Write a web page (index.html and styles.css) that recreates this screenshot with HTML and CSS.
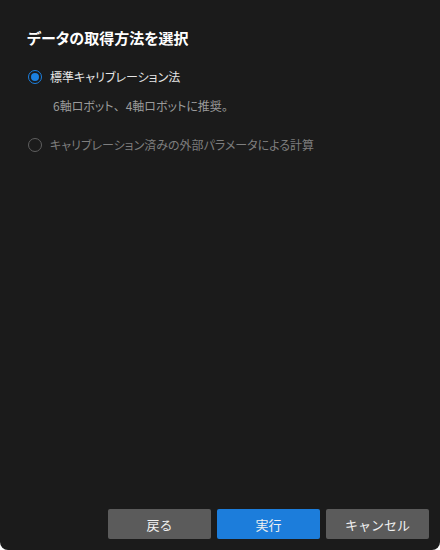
FILE: index.html
```html
<!DOCTYPE html>
<html lang="ja">
<head>
<meta charset="utf-8">
<link rel="stylesheet" href="styles.css">
</head>
<body>
<div class="dialog">
  <div class="content">
    <h1 class="title">データの取得方法を選択</h1>
    <div class="option">
      <span class="radio checked"></span>
      <span class="label">標準キャリブレーション法</span>
    </div>
    <div class="desc">6軸ロボット<span class="comma">、</span>4軸ロボットに推奨。</div>
    <div class="option disabled">
      <span class="radio"></span>
      <span class="label">キャリブレーション済みの外部パラメータによる計算</span>
    </div>
  </div>
  <div class="footer">
    <button class="btn">戻る</button>
    <button class="btn primary">実行</button>
    <button class="btn">キャンセル</button>
  </div>
</div>
</body>
</html>
```
FILE: styles.css
```css
html {
  background: #ffffff;
}
body {
  margin: 0;
  width: 440px;
  height: 550px;
  font-family: "Noto Sans CJK JP", "Noto Sans", sans-serif;
  font-feature-settings: "palt";
}
.dialog {
  width: 440px;
  height: 550px;
  background: #1b1b1b;
  border-radius: 0 0 8px 8px;
  display: flex;
  flex-direction: column;
  box-sizing: border-box;
}
.content {
  flex: 1;
  padding: 28px 0 0 27px;
}
.title {
  margin: 0;
  font-size: 15px;
  font-weight: bold;
  color: #ffffff;
  line-height: 20px;
}
.option {
  display: flex;
  align-items: center;
  margin-top: 19px;
  color: #e6e6e6;
  font-size: 12px;
  line-height: 20px;
}
.radio {
  width: 12px;
  height: 12px;
  border-radius: 50%;
  border: 1px solid #5f5f5f;
  box-sizing: content-box;
  margin-left: 1px;
  margin-right: 8px;
  position: relative;
}
.radio.checked {
  border: 1px solid #1b80e0;
}
.radio.checked::after {
  content: "";
  position: absolute;
  left: 2px;
  top: 2px;
  width: 8px;
  height: 8px;
  border-radius: 50%;
  background: #1b80e0;
}
.desc {
  margin: 10px 0 0 26px;
  font-size: 12px;
  color: #9a9a9a;
  line-height: 18px;
}
.comma {
  font-feature-settings: normal;
}
.option.disabled {
  margin-top: 20px;
  color: #7e7e7e;
}
.footer {
  display: flex;
  justify-content: flex-end;
  gap: 6px;
  padding: 0 11px 11px 0;
}
.btn {
  width: 103px;
  height: 30px;
  border: none;
  border-radius: 2px;
  background: #5b5b5b;
  color: #f0f0f0;
  font-family: inherit;
  font-size: 13px;
  padding: 0;
}
.btn.primary {
  background: #1c7ddb;
}
```
